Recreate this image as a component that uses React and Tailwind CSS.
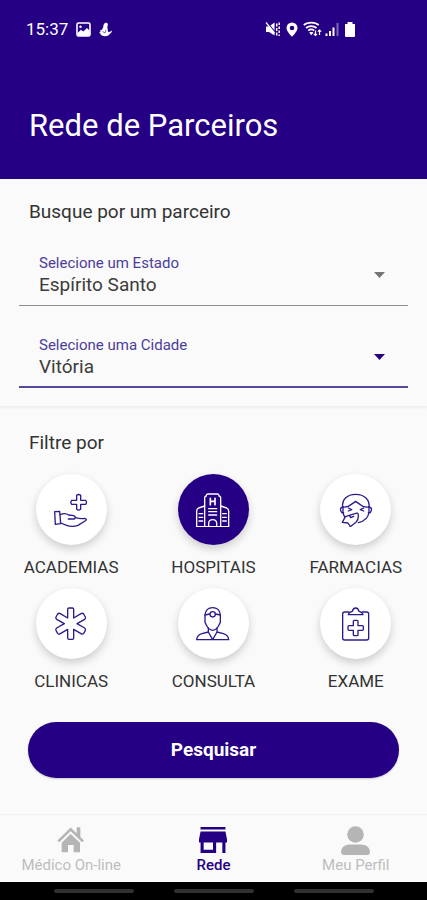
import { useState } from "react";

function StatusBar() {
  return (
    <div className="flex h-[58px] items-center justify-between pl-[26px] pr-[71px] text-white">
      <div className="flex items-center gap-2">
        <span className="text-[17px] leading-6">15:37</span>
        <svg className="h-[15px] w-[15px]" viewBox="0 0 15 15" fill="none" stroke="currentColor" aria-hidden="true">
          <rect x="1" y="1" width="13" height="13" rx="1.5" strokeWidth="1.6" />
          <circle cx="4.5" cy="4.8" r="1" fill="currentColor" strokeWidth="0.5" />
          <path d="M1.5 11 5 7.8l2.2 1.6L11 6l3 3v5H1.5z" fill="currentColor" stroke="none" />
        </svg>
        <svg className="h-[15px] w-[13px]" viewBox="0 0 13 15" fill="currentColor" aria-hidden="true">
          <path d="M6.500.8c1.600-.6 2.800.9 2.300 2.500L8.300 5l.7 4.800 1.500.200L13 8.600c-.2 1.600-1.200 2.900-2.400 3.500C9.800 13.600 8.200 14.300 6 14.300c-2.600 0-4.200-1-4.600-2.500L0 10.800l1.500-.700L1 8.500l1.700-.5C3 6.800 4 6.200 4.200 5.200 4.400 3.500 4.600 1.500 6.500.8z" />
          <path d="M3.500 9.500 6 11l1-3" fill="none" stroke="#250084" strokeWidth="0.6" />
        </svg>
      </div>
      <div className="flex items-center gap-[5px]">
        <svg className="h-4 w-4" viewBox="0 0 16 16" fill="none" stroke="currentColor" aria-hidden="true">
          <path d="M1 5.500h3L9.500 1.500v13L4 11H1z" fill="currentColor" stroke="none" />
          <path d="M2 1.500 10 11" stroke="#250084" strokeWidth="1.200" />
          <path d="M1 1.500 9.500 12" strokeWidth="1.200" />
          <path d="M11.700 2.500v3M11.700 7v3M11.700 11.500v3M14.200 1.500v2.500M14.200 5.500V8M14.200 9.500V12M14.200 13.500V15" strokeWidth="1.500" />
        </svg>
        <svg className="h-[15px] w-3" viewBox="0 0 12 15" fill="currentColor" aria-hidden="true">
          <path fillRule="evenodd" d="M6 .5A5.500 5.500 0 0 0 .5 6c0 3.600 5.500 8.700 5.500 8.700S11.500 9.600 11.500 6A5.500 5.500 0 0 0 6 .5zm0 3.200a2.300 2.300 0 1 1 0 4.600 2.300 2.300 0 0 1 0-4.600z" />
        </svg>
        <div className="flex items-center gap-[3px]">
          <svg className="h-4 w-[19px]" viewBox="0 0 19 16" fill="none" stroke="currentColor" aria-hidden="true">
            <path d="M.8 4.200C4.500.7 12 .7 15.700 4.200M3 7c3-2.600 7.600-2.600 10.500 0M5.200 9.600c2-1.500 4.200-1.500 6 0" strokeWidth="1.700" />
            <path d="m6.800 11.500 1.500 2.300 1.500-2.300z" fill="currentColor" />
            <path d="M12.500 9.500v5m-1.700-1.700 1.700 1.700 1.500-1.500M16.500 14V9m-1.700 1.700L16.500 9l1.700 1.700" strokeWidth="1.200" />
          </svg>
          <svg className="h-[14px] w-[14px]" viewBox="0 0 14 14" fill="currentColor" aria-hidden="true">
            <path d="M.5 11.500h2V14h-2zM4 9h2v5H4zM7.500 5.500h2V14h-2z" />
            <path d="M11.500 1h2v13h-2z" opacity="0.4" />
          </svg>
        </div>
        <svg className="h-[15px] w-3" viewBox="0 0 12 15" fill="currentColor" aria-hidden="true">
          <path d="M3.500 0h5v2h2.500v12a1 1 0 0 1-1 1H2a1 1 0 0 1-1-1V2h2.500z" />
        </svg>
      </div>
    </div>
  );
}

function SelectField({ id, label, value, options, active }) {
  return (
    <div
      className={
        active
          ? "relative flex h-[59px] flex-col border-b-2 border-[#574a9c]"
          : "relative flex h-[59px] flex-col border-b border-[#8f8f8f]"
      }
    >
      <label htmlFor={id} className="px-5 pt-[6px] text-[15px] leading-5 text-[#4c3d9c]">
        {label}
      </label>
      <select
        id={id}
        defaultValue={value}
        className="w-full appearance-none bg-transparent px-5 text-[19px] leading-6 text-[#3c3c3c] outline-none"
      >
        {options.map((option) => (
          <option key={option}>{option}</option>
        ))}
      </select>
      <svg
        className={
          active
            ? "pointer-events-none absolute top-[25px] right-[23px] h-[6px] w-[11px] text-[#250084]"
            : "pointer-events-none absolute top-[25px] right-[23px] h-[6px] w-[11px] text-[#757575]"
        }
        viewBox="0 0 11 6"
        fill="currentColor"
        aria-hidden="true"
      >
        <path d="M0 0h11L5.500 6z" />
      </svg>
    </div>
  );
}

const icons = {
  academias: (
    <>
      <path d="M68 7q6-5 12 0v15h15q5 6 0 12H80v15q-6 5-12 0V34H53q-5-6 0-12h15z" />
      <path d="M2 56l15-1 3 37-16 2z" />
      <path d="M19 65q14-7 25 1l15 2q9 5 2 10H43" />
      <path d="M64 74q17 4 28 2 10 3 1 8L72 97q-18 6-34 0l-18-7" />
    </>
  ),
  hospitais: (
    <>
      <path d="M26 101V14q0-4 5-5V7q1-4 5-4h28q4 0 5 4v2q5 1 5 5v87" />
      <path d="M26 39L8 45q-6 3-6 10v46h96V55q0-7-6-10l-18-6" />
      <path d="M38 101V90q1-10 12-10t12 10v11" />
      <path d="M43 16v19M57 16v19M43 25h14" strokeWidth="5" />
      <path d="M38 47h24M38 56h24M38 66h24M9 62h11M9 73h11M9 84h11M80 62h11M80 73h11M80 84h11" />
    </>
  ),
  farmacias: (
    <>
      <path d="M11 43C8 20 24 4 50 4s43 16 40 39" />
      <path d="M12 42c12 1 22-5 25-8l13-9 14 10c8 7 17 8 26 7" />
      <path d="M12 42q-9 1-7 10 2 9 9 7M90 42q9 1 7 10-2 9-9 7" />
      <path d="M12 42v15q1 8 5 15M90 42v15q-3 25-32 32" />
      <path d="M28 45l10 5-10 4M74 45l-10 5 10 4" />
      <path d="M31 67l17-5q9-5 10 4 1 15-7 22L34 101l-7-11-17-2 9-17z" />
      <path d="M31 67l4 7 9-4" />
    </>
  ),
  clinicas: (
    <path d="M41 33V7q0-4 4-4h10q4 0 4 4v26l22-13q5-3 8 1l5 9q2 4-2 7L69 50l23 13q4 3 2 7l-5 9q-3 4-8 1L59 67v26q0 4-4 4H45q-4 0-4-4V67L19 80q-5 3-8-1l-5-9q-2-4 2-7l23-13L8 37q-4-3-2-7l5-9q3-4 8-1z" />
  ),
  consulta: (
    <>
      <path d="M27 46V23Q30 2 50 2t23 21v23l-4 8q-6 14-19 16-13-2-19-16z" />
      <path d="M27 24l14-3M59 21l14 3" />
      <circle cx="50" cy="22" r="8" />
      <path d="M37 63v12L18 80Q3 84 2 98h96q-1-14-16-18l-19-5V63M37 75l13 23 13-23" />
    </>
  ),
  exame: (
    <>
      <path d="M30 15H17q-6 0-6 6v72q0 6 6 6h66q6 0 6-6V21q0-6-6-6H70" />
      <path d="M28 23q2-8 12-10 2-10 10-10t10 10q10 2 12 10z" />
      <path d="M43 43q0-3 3-3h8q3 0 3 3v13h13q3 0 3 3v8q0 3-3 3H57v13q0 3-3 3h-8q-3 0-3-3V70H30q-3 0-3-3v-8q0-3 3-3h13z" />
    </>
  ),
};

const filters = [
  { id: "academias", label: "ACADEMIAS" },
  { id: "hospitais", label: "HOSPITAIS" },
  { id: "farmacias", label: "FARMACIAS" },
  { id: "clinicas", label: "CLINICAS" },
  { id: "consulta", label: "CONSULTA" },
  { id: "exame", label: "EXAME" },
];

function FilterButton({ id, label, selected, onSelect }) {
  return (
    <button
      type="button"
      aria-pressed={selected}
      onClick={() => onSelect(id)}
      className="flex flex-col items-center gap-[10px]"
    >
      <span
        className={
          selected
            ? "flex size-[71px] items-center justify-center rounded-full bg-[#250084] text-white shadow-[0_4px_8px_rgba(0,0,0,0.18)]"
            : "flex size-[71px] items-center justify-center rounded-full bg-white text-[#2f1a8c] shadow-[0_4px_8px_rgba(0,0,0,0.18)]"
        }
      >
        <svg
          className="size-[34px]"
          viewBox="0 0 102 102"
          fill="none"
          stroke="currentColor"
          strokeWidth="4"
          strokeLinejoin="round"
          strokeLinecap="round"
          aria-hidden="true"
        >
          {icons[id]}
        </svg>
      </span>
      <span className="text-[17px] leading-6 text-[#333333]">{label}</span>
    </button>
  );
}

function HomeIcon() {
  return (
    <svg className="h-[26px] w-7" viewBox="0 0 84 78" aria-hidden="true">
      <path d="M4 43 41 7l37 36" fill="none" stroke="currentColor" strokeWidth="8" />
      <path d="M59 1h11v32L59 22zM14 47l27-26 28 26v29H50V54H33v22H14z" fill="currentColor" />
    </svg>
  );
}

function StoreIcon() {
  return (
    <svg className="h-[26px] w-7" viewBox="3 4 18 16" preserveAspectRatio="none" fill="currentColor" aria-hidden="true">
      <path d="M20 4H4v1.500h16zM21 13.500v-2L20 6.700H4l-1 4.800v2h1V20h10v-6.500h4V20h2v-6.500zM12 18H6v-4.500h6z" />
    </svg>
  );
}

function PersonIcon() {
  return (
    <svg className="h-[29px] w-[29px]" viewBox="0 0 29 29" fill="currentColor" aria-hidden="true">
      <circle cx="14.500" cy="8.500" r="8.300" />
      <path d="M8 18.500h13q8 1 8 7.500 0 3-3 3H3q-3 0-3-3 0-6.500 8-7.500z" />
    </svg>
  );
}

function NavLink({ label, active, children }) {
  return (
    <a
      href="#"
      aria-current={active ? "page" : undefined}
      className={
        active
          ? "flex flex-col items-center text-[15px] leading-5 font-medium text-[#250084]"
          : "flex flex-col items-center text-[15px] leading-5 text-[#bdbdbd]"
      }
    >
      <span className={active ? "flex h-[30px] items-center" : "flex h-[30px] items-center text-[#b5b5b5]"}>
        {children}
      </span>
      {label}
    </a>
  );
}

export default function App() {
  const [selected, setSelected] = useState("hospitais");

  return (
    <div className="flex min-h-screen flex-col bg-[#fafafa] font-[Roboto,sans-serif]">
      <header className="bg-[#250084] pb-8 text-white">
        <StatusBar />
        <h1 className="px-[29px] pt-[47px] text-[31px] leading-[42px]">Rede de Parceiros</h1>
      </header>

      <main className="flex flex-col">
        <section className="border-b border-[#efefef] px-[19px] pt-[21px] pb-[18px] shadow-[0_1px_2px_rgba(0,0,0,0.06)]">
          <h2 className="px-[10px] text-[19px] leading-6 text-[#333333]">Busque por um parceiro</h2>
          <div className="flex flex-col gap-[23px] pt-[23px]">
            <SelectField
              id="estado"
              label="Selecione um Estado"
              value="Espírito Santo"
              options={["Espírito Santo", "Minas Gerais", "Rio de Janeiro", "São Paulo"]}
            />
            <SelectField
              id="cidade"
              label="Selecione uma Cidade"
              value="Vitória"
              options={["Vitória", "Vila Velha", "Serra", "Cariacica"]}
              active
            />
          </div>
        </section>

        <section className="pt-6">
          <h2 className="px-[29px] text-[19px] leading-6 text-[#333333]">Filtre por</h2>
          <div className="grid grid-cols-3 gap-y-[9px] pt-[19px]">
            {filters.map((filter) => (
              <FilterButton
                key={filter.id}
                id={filter.id}
                label={filter.label}
                selected={selected === filter.id}
                onSelect={setSelected}
              />
            ))}
          </div>
        </section>

        <div className="px-7 pt-[29px] pb-9">
          <button
            type="button"
            className="h-14 w-full rounded-full bg-[#250084] text-[19px] leading-6 font-bold text-white shadow-[0_1px_2px_rgba(0,0,0,0.2)]"
          >
            Pesquisar
          </button>
        </div>
      </main>

      <footer className="mt-auto">
        <nav className="grid grid-cols-3 border-t border-[#f0f0f0] pt-[10px] pb-[7px]" aria-label="Principal">
          <NavLink label="Médico On-line">
            <HomeIcon />
          </NavLink>
          <NavLink label="Rede" active>
            <StoreIcon />
          </NavLink>
          <NavLink label="Meu Perfil">
            <PersonIcon />
          </NavLink>
        </nav>
        <div className="flex h-[18px] items-center justify-center gap-10 bg-black">
          <span className="h-1 w-20 rounded-full bg-[#303030]" />
          <span className="h-1 w-20 rounded-full bg-[#303030]" />
          <span className="h-1 w-20 rounded-full bg-[#303030]" />
        </div>
      </footer>
    </div>
  );
}
